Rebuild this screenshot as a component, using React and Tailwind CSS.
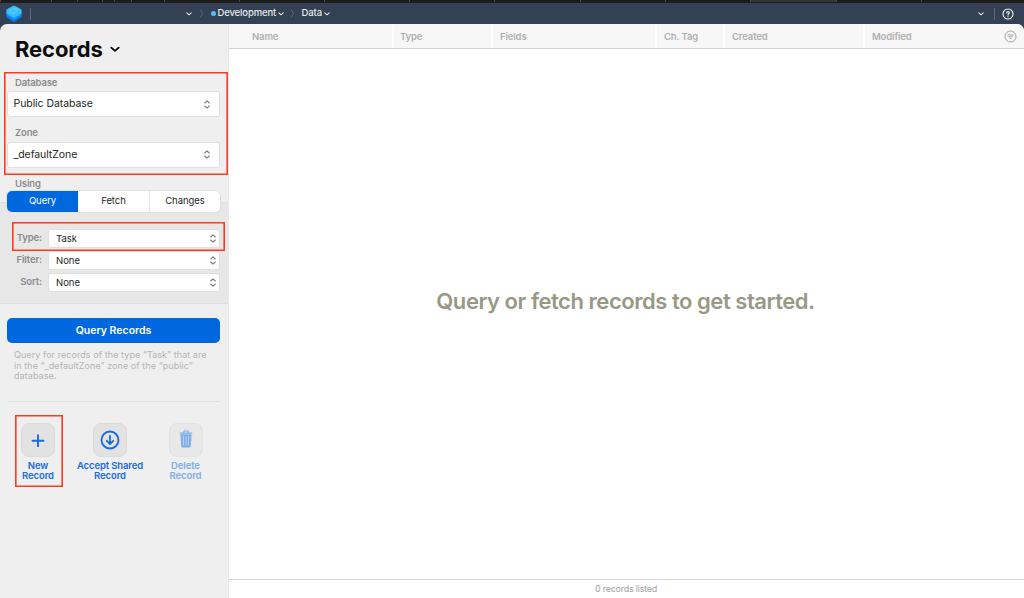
import React from 'react';

const tabs = ['w-[51px]', 'w-[26px]', 'w-[25px]', 'w-[12px]', 'w-[17px]', 'w-[33px]', 'w-[75px]', 'w-[85px]', 'w-[85px]', 'w-[85px]', 'w-[86px]', 'w-[85px]', 'w-[85px]', 'w-[86px]', 'w-[85px]', 'w-[85px]'];

function Chevron({ className, stroke = 1.1 }) {
  return (
    <svg viewBox="0 0 6 4" className={className} fill="none" stroke="currentColor" strokeWidth={stroke} strokeLinecap="round" strokeLinejoin="round">
      <path d="M.8 .9 3 2.8 5.2 .9" />
    </svg>
  );
}

function Separator({ className }) {
  return (
    <svg viewBox="0 0 5 9" className={`h-[9px] w-[5px] text-[#687386] ${className}`} fill="none" stroke="currentColor" strokeWidth="0.8">
      <path d="M1 .5 3.8 4.5 1 8.5" />
    </svg>
  );
}

function Stepper({ className = '' }) {
  return (
    <svg viewBox="0 0 6 9" className={`h-[9px] w-[6px] text-[#7c7c7c] ${className}`} fill="none" stroke="currentColor" strokeWidth="1.1" strokeLinecap="round" strokeLinejoin="round">
      <path d="M.7 3 3 .8 5.3 3M.7 6 3 8.2 5.3 6" />
    </svg>
  );
}

function TopBar() {
  return (
    <header className="flex h-[21px] items-center bg-[#344053] text-[9.5px] font-medium text-[#e6e9ee]">
      <svg viewBox="0 0 16 18" className="ml-[6px] h-[18px] w-[16px]">
        <path d="M8 5 15.5 7v5.2L9.3 16.5Q8 17.2 6.7 16.5L.5 12.2V7Z" fill="#0878ed" />
        <path d="M8 3 15.5 5v4.7L9.3 14Q8 14.8 6.7 14L.5 9.7V5Z" fill="#159bf7" />
        <path d="M6.8 1Q8 .3 9.2 1l5.5 3.1q.8.5.8 1.3v2.2q0 .7-.6 1.1L9.3 12Q8 12.8 6.7 12L1.1 8.7Q.5 8.3.5 7.6V5.4q0-.8.8-1.3Z" fill="#38bdf8" />
        <path d="M3.8 7.2C4 4.6 8.6 2.7 11.7 4.2 11.2 7 6.6 9.5 4.7 7.4" fill="none" stroke="#79dcfb" strokeWidth=".8" />
      </svg>
      <span className="ml-[8px] h-[12px] w-px bg-[#5d687a]" />
      <Chevron className="ml-[155px] h-[4px] w-[6px]" />
      <Separator className="ml-[7px]" />
      <span className="ml-[7px] h-[5px] w-[5px] rounded-full bg-[#4cc2f7]" />
      <span className="ml-[1.5px] w-[58px] whitespace-nowrap tracking-[-0.14px]">Development</span>
      <Chevron className="ml-[2px] h-[4px] w-[6px]" />
      <Separator className="ml-[6px]" />
      <span className="ml-[7px] w-[21px] whitespace-nowrap tracking-[-0.1px]">Data</span>
      <Chevron className="ml-[1.5px] h-[4px] w-[6px]" />
      <Chevron className="ml-auto h-[4px] w-[6px]" />
      <span className="ml-[10px] h-[12px] w-px bg-[#5d687a]" />
      <svg viewBox="0 0 12 12" className="mr-[10px] ml-[7px] h-[12px] w-[12px]" fill="none" stroke="#f2f4f7" strokeWidth="1.1" strokeLinecap="round">
        <circle cx="6" cy="6" r="5" />
        <path d="M4.7 4.9C4.7 3.2 7.4 3.3 7.3 4.8 7.2 5.7 6 5.8 6 6.9M6 8.4v.1" />
      </svg>
    </header>
  );
}

function SelectBox({ label, value }) {
  return (
    <div className="h-[50.5px]">
      <div className="flex h-[17px] items-center pt-px pl-[8px] text-[9.5px] font-semibold tracking-[-0.15px] text-[#8b8b8b]">{label}</div>
      <div className="flex h-[26px] items-center justify-between rounded-[3px] border border-[#dfdfdf] bg-white pr-[9px] pl-[5.5px] text-[10.5px] tracking-[-0.07px] text-[#262626]">
        {value}
        <Stepper />
      </div>
    </div>
  );
}

function ParamRow({ label, value }) {
  return (
    <div className="flex h-[22px] items-start">
      <span className="w-[42px] pt-[2px] text-right text-[9.5px] leading-[13px] font-semibold tracking-[-0.12px] text-[#8b8b8b]">{label}</span>
      <div className="ml-[6px] flex h-[19px] w-[172px] items-center justify-between rounded-[3px] border border-[#dfdfdf] bg-white pr-[3.5px] pl-[7px] text-[9.5px] text-[#262626]">
        <span className="pt-px">{value}</span>
        <Stepper />
      </div>
    </div>
  );
}

function Action({ className, first, second, color = 'text-[#176ae0]', tile = 'bg-[#e2e2e2] border-[#dadada]', children }) {
  return (
    <div className={`flex flex-col items-center ${color} ${className}`}>
      <div className={`flex h-[34px] w-[34px] items-center justify-center rounded-[8px] border ${tile}`}>{children}</div>
      <div className="mt-[3.5px] text-center text-[9.5px] leading-[10.8px] font-semibold tracking-[-0.12px] whitespace-nowrap">
        {first}<br />{second}
      </div>
    </div>
  );
}

function Sidebar() {
  return (
    <aside className="relative w-[228px] shrink-0 bg-[#efefef]">
      <div className="flex h-[50px] items-center pl-[15px]">
        <h1 className="w-[89px] text-[22px] font-bold tracking-[-0.1px] text-[#0c0c0c]">Records</h1>
        <Chevron className="mt-px ml-[6px] h-[7px] w-[10px]" />
      </div>
      <div className="pr-[8px] pl-[7px]">
        <SelectBox label="Database" value="Public Database" />
        <SelectBox label="Zone" value="_defaultZone" />
        <div className="flex h-[16px] items-center pt-[2px] pl-[8px] text-[9.5px] font-semibold tracking-[-0.15px] text-[#8b8b8b]">Using</div>
      </div>
      <div className="h-[113px] border-b border-[#dfdfdf] bg-[linear-gradient(#efefef_11px,#dedede_11px,#dedede_12px,#e7e7e7_12px)]">
        <div className="mr-[8px] ml-[7px] grid h-[21px] grid-cols-3 overflow-hidden rounded-[5px] bg-white text-center text-[9.5px] leading-[20px] tracking-[-0.05px] text-[#262626] shadow-[0_0_0_1px_#e2e2e2]">
          <span className="bg-[#0068df] text-white">Query</span>
          <span>Fetch</span>
          <span className="border-l border-[#e5e5e5]">Changes</span>
        </div>
        <div className="pt-[17px]">
          <ParamRow label="Type:" value="Task" />
          <ParamRow label="Filter:" value="None" />
          <ParamRow label="Sort:" value="None" />
        </div>
      </div>
      <div className="mr-[8px] ml-[7px]">
        <button className="mt-[14px] flex h-[25px] w-full items-center justify-center rounded-[5px] bg-[#0068df] text-[10.5px] font-semibold text-white">Query Records</button>
        <p className="mt-[7px] pl-[7px] text-[9px] leading-[10.7px] tracking-[0.07px] whitespace-nowrap text-[#b5b5b5]">
          Query for records of the type “Task” that are<br />in the “_defaultZone” zone of the “public”<br />database.
        </p>
        <div className="mt-[19px] h-px bg-[#e2e2e2]" />
      </div>
      <div className="mt-[21px] flex">
        <Action first="New" second="Record" className="ml-[13px] w-[50px]">
          <svg viewBox="0 0 14 14" className="h-[14px] w-[14px]" fill="none" stroke="currentColor" strokeWidth="1.9" strokeLinecap="round"><path d="M7 2.2v11M1.5 7.7h11" /></svg>
        </Action>
        <Action first="Accept Shared" second="Record" className="ml-[12px] w-[70px]">
          <svg viewBox="0 0 20 20" className="-mt-px h-[20px] w-[20px]" fill="none" stroke="currentColor" strokeWidth="1.8" strokeLinecap="round" strokeLinejoin="round"><circle cx="10" cy="10" r="8.5" /><path d="M10 5.8v8M6.8 10.8l3.2 3.2 3.2-3.2" /></svg>
        </Action>
        <Action first="Delete" second="Record" className="ml-[15px] w-[51px]" color="text-[#7daee9]" tile="bg-[#e8e8e8] border-[#e3e3e3]">
          <svg viewBox="0 0 14 18" className="-mt-[2px] h-[18px] w-[14px]" fill="currentColor"><path d="M4.3 2.5V1.2Q4.3.4 5.1.4H9q.8 0 .8.8v1.3h3.4v1.2H.8V2.5ZM5.4 1.5v1h3.2v-1Z" /><path d="M1.4 4.2h11.2l-.9 12.1q-.1 1.2-1.3 1.2H3.6q-1.2 0-1.3-1.2Z" /><path d="m4.3 6 .4 9.5M7 6v9.5M9.7 6l-.4 9.5" stroke="#e8e8e8" strokeWidth=".6" /></svg>
        </Action>
      </div>
      <div className="absolute top-[48px] left-[4px] h-[103px] w-[224px] border border-[#ff3b1f] shadow-[inset_0_0_0_.6px_#ff3b1f]" />
      <div className="absolute top-[198px] left-[12px] h-[29px] w-[213px] border border-[#ff3b1f] shadow-[inset_0_0_0_.6px_#ff3b1f]" />
      <div className="absolute top-[391px] left-[15px] h-[72px] w-[48px] border border-[#ff3b1f] shadow-[inset_0_0_0_.6px_#ff3b1f]" />
    </aside>
  );
}

function Column({ width, pad = 'pl-[7px]', children }) {
  return <div className={`flex h-full items-center border-r-2 border-white pt-[2px] ${pad} ${width}`}>{children}</div>;
}

function Records() {
  return (
    <main className="flex min-w-0 flex-1 flex-col border-l border-[#e8e8e8] bg-white">
      <div className="flex h-[25px] shrink-0 items-center border-b border-[#d2d2d2] bg-[#f7f7f7] text-[9.5px] font-semibold tracking-[-0.14px] text-[#b0b0b0]">
        <Column width="w-[165px]" pad="pl-[23px]">Name</Column>
        <Column width="w-[99px]" pad="pl-[6px]">Type</Column>
        <Column width="w-[164px]">Fields</Column>
        <Column width="w-[68px]">Ch. Tag</Column>
        <Column width="w-[140px]">Created</Column>
        <div className="flex flex-1 items-center justify-between pr-[7px] pl-[7px]">
          <span className="pt-[2px]">Modified</span>
          <svg viewBox="0 0 13 13" className="h-[13px] w-[13px]" fill="none" stroke="#999" strokeWidth=".9"><circle cx="6.5" cy="6.5" r="5.5" /><path d="M3.5 5h6M4.5 6.8h4M5.6 8.6h1.8" /></svg>
        </div>
      </div>
      <div className="flex flex-1 items-center justify-center pr-[2px] pb-[25px] text-[22px] font-semibold tracking-[-0.46px] whitespace-nowrap text-[#979984]">
        Query or fetch records to get started.
      </div>
      <footer className="flex h-[19px] shrink-0 items-center justify-center border-t border-[#d6d6d6] pr-px text-[9px] tracking-[-0.24px] text-[#a2a2a2]">0 records listed</footer>
    </main>
  );
}

export default function App() {
  return (
    <div className="flex h-[598px] w-[1024px] flex-col overflow-hidden bg-[#344053] font-['Inter',sans-serif]">
      <div className="flex h-[3px] shrink-0 bg-[#1c1c1b]">
        {tabs.map((w, i) => <span key={i} className={`h-[2px] shrink-0 border-l border-[#4b4b49] ${i === 13 ? 'bg-[#343432]' : ''} ${w}`} />)}
      </div>
      <TopBar />
      <div className="flex min-h-0 flex-1 overflow-hidden rounded-t-[7px]">
        <Sidebar />
        <Records />
      </div>
    </div>
  );
}
